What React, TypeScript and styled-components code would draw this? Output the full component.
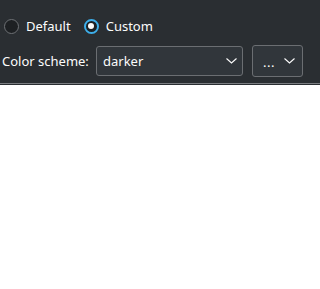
import React from 'react';
import styled, { createGlobalStyle } from 'styled-components';

const GlobalStyle = createGlobalStyle`
  html, body {
    margin: 0;
    padding: 0;
    background: #ffffff;
  }
  body {
    font-family: 'Noto Sans', 'DejaVu Sans', sans-serif;
    font-size: 13px;
  }
`;

const Panel = styled.div`
  background: #2a2e32;
  height: 84px;
  box-sizing: border-box;
  padding-top: 15px;
  border-bottom: 1px solid #7a7d81;
  display: flex;
  flex-direction: column;
  gap: 8px;
  color: #fcfcfc;
`;

const Gap = styled.div`
  height: 1px;
  background: #2a2e32;
`;

const RadioRow = styled.div`
  display: flex;
  align-items: center;
  height: 22px;
  padding-left: 4px;
  gap: 13px;
`;

const RadioLabel = styled.label`
  display: flex;
  align-items: center;
  gap: 7px;
  cursor: default;
`;

const RadioCircle = styled.span<{ $checked?: boolean }>`
  position: relative;
  width: 15px;
  height: 15px;
  box-sizing: border-box;
  border-radius: 50%;
  border: ${p => (p.$checked ? '2px solid #3daee9' : '1px solid #6e7175')};
  background: #1d2023;
  flex-shrink: 0;

  &::after {
    content: '';
    display: ${p => (p.$checked ? 'block' : 'none')};
    position: absolute;
    left: 50%;
    top: 50%;
    width: 6px;
    height: 6px;
    margin: -3px 0 0 -3px;
    border-radius: 50%;
    background: #fcfcfc;
  }
`;

const SchemeRow = styled.div`
  display: flex;
  align-items: center;
  height: 32px;
  padding-left: 2px;
`;

const FieldLabel = styled.span`
  width: 94px;
`;

const Combo = styled.div<{ $width: number; $height: number; $padLeft: number; $padRight: number }>`
  display: flex;
  align-items: center;
  justify-content: space-between;
  box-sizing: border-box;
  width: ${p => p.$width}px;
  height: ${p => p.$height}px;
  padding: 0 ${p => p.$padRight}px 0 ${p => p.$padLeft}px;
  border: 1px solid #6b6e72;
  border-radius: 3px;
  background: #31363b;
`;

const MenuButtonGap = styled.div`
  width: 9px;
`;

const Chevron = () => (
  <svg width="11" height="6" viewBox="0 0 11 6" fill="none">
    <path d="M0.5 0.5 L5.5 5 L10.5 0.5" stroke="#fcfcfc" strokeWidth="1.1" />
  </svg>
);

const Dots = styled.span`
  letter-spacing: 0.5px;
  margin-top: 2px;
`;

export default function App() {
  return (
    <>
      <GlobalStyle />
      <Panel>
        <RadioRow>
          <RadioLabel>
            <RadioCircle />
            Default
          </RadioLabel>
          <RadioLabel>
            <RadioCircle $checked />
            Custom
          </RadioLabel>
        </RadioRow>
        <SchemeRow>
          <FieldLabel>Color scheme:</FieldLabel>
          <Combo $width={147} $height={30} $padLeft={6} $padRight={5}>
            <span>darker</span>
            <Chevron />
          </Combo>
          <MenuButtonGap />
          <Combo $width={51} $height={32} $padLeft={10} $padRight={7}>
            <Dots>...</Dots>
            <Chevron />
          </Combo>
        </SchemeRow>
      </Panel>
      <Gap />
    </>
  );
}
